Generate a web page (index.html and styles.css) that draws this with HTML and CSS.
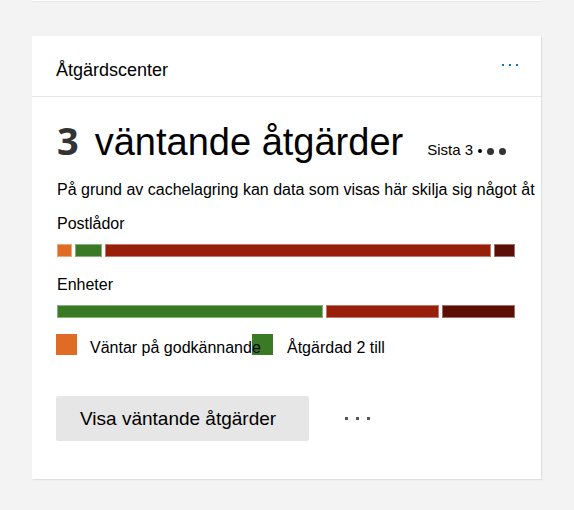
FILE: index.html
```html
<!DOCTYPE html>
<html lang="sv">
<head>
<meta charset="utf-8">
<link rel="stylesheet" href="styles.css">
</head>
<body>
<div class="prev-card"></div>
<section class="card">
  <header class="card-header">
    <h2 class="card-title">Åtgärdscenter</h2>
    <span class="dots blue"><i></i><i></i><i></i></span>
  </header>
  <div class="card-body">
    <div class="headline">
      <span class="count">3</span>
      <span class="headline-text">väntande åtgärder</span>
      <span class="recent">Sista 3<i class="pip small"></i><i class="pip big"></i><i class="pip big"></i></span>
    </div>
    <p class="note">På grund av cachelagring kan data som visas här skilja sig något åt</p>

    <div class="metric">
      <div class="metric-label">Postlådor</div>
      <div class="bar">
        <span class="seg orange" style="width: 15px"></span>
        <span class="seg green" style="width: 27px"></span>
        <span class="seg red" style="width: 386px"></span>
        <span class="seg dark" style="width: 21px"></span>
      </div>
    </div>

    <div class="metric">
      <div class="metric-label">Enheter</div>
      <div class="bar">
        <span class="seg green" style="width: 266px"></span>
        <span class="seg red" style="width: 113px"></span>
        <span class="seg dark" style="width: 73px"></span>
      </div>
    </div>

    <div class="legend">
      <span class="swatch orange"></span>
      <span class="legend-text first">Väntar på godkännande</span>
      <span class="swatch green"></span>
      <span class="legend-text second">Åtgärdad 2 till</span>
    </div>

    <div class="actions">
      <button class="btn">Visa väntande åtgärder</button>
      <span class="dots grey"><i></i><i></i><i></i></span>
    </div>
  </div>
</section>
</body>
</html>
```
FILE: styles.css
```css
html, body {
  margin: 0;
  padding: 0;
}
body {
  background: #f3f3f3;
  font-family: "Liberation Sans", Arial, sans-serif;
  color: #000;
  width: 574px;
  height: 510px;
  overflow: hidden;
}
.prev-card {
  margin-left: 32px;
  width: 509px;
  height: 1px;
  background: #fff;
  box-shadow: 0 1px 1px rgba(0,0,0,0.06);
}
.card {
  margin: 35px 0 0 32px;
  width: 509px;
  height: 443px;
  background: #fff;
  box-shadow: 1px 1px 1px rgba(0,0,0,0.08), 0 0 1px rgba(0,0,0,0.04);
  box-sizing: border-box;
}
.card-header {
  height: 60px;
  border-bottom: 1px solid #e6e6e6;
  display: flex;
  align-items: center;
  justify-content: space-between;
  padding: 0 23px 0 24px;
}
.card-title {
  margin: 8px 0 0;
  font-weight: normal;
  font-size: 18px;
}
.dots {
  display: flex;
}
.dots i {
  display: block;
}
.dots.blue {
  gap: 5px;
  margin-top: -2px;
}
.dots.blue i {
  width: 2px;
  height: 2px;
  background: #0078d4;
}
.dots.grey {
  gap: 8px;
  margin-left: 36px;
}
.dots.grey i {
  width: 3px;
  height: 3px;
  background: #555;
}
.card-body {
  padding: 21px 24px 0 25px;
}
.headline {
  display: flex;
  align-items: baseline;
  height: 44px;
}
.count {
  font-family: "Open Sans", "Liberation Sans", sans-serif;
  font-weight: 700;
  font-size: 38px;
  color: #333;
  line-height: 44px;
}
.headline-text {
  font-size: 38px;
  line-height: 44px;
  margin-left: 16px;
}
.recent {
  font-size: 15px;
  margin-left: 24px;
}
.pip {
  display: inline-block;
  vertical-align: middle;
  border-radius: 50%;
  background: #333;
}
.pip.small {
  width: 4px;
  height: 4px;
  margin-left: 5px;
  background: #000;
}
.pip.big {
  width: 7px;
  height: 7px;
  margin-left: 5px;
}
.note {
  margin: 19px 0 0;
  font-size: 16px;
  line-height: 18px;
  white-space: nowrap;
}
.metric {
  margin-top: 16px;
}
.metric + .metric {
  margin-top: 19px;
}
.metric-label {
  font-size: 16px;
  line-height: 18px;
}
.bar {
  display: flex;
  gap: 3px;
  height: 13px;
  margin-top: 11px;
}
.seg {
  display: block;
  flex: none;
  box-sizing: border-box;
  height: 13px;
  border: 1px solid rgba(255,255,255,0.4);
}
.orange { background: #e06b25; }
.green { background: #3b7a25; }
.red { background: #98200b; }
.dark { background: #5c0f05; }
.legend {
  display: flex;
  align-items: flex-start;
  margin-top: 16px;
  height: 21px;
}
.swatch {
  width: 21px;
  height: 21px;
  flex: none;
}
.legend .swatch.orange {
  margin-left: -1px;
}
.legend-text {
  font-size: 16px;
  line-height: 21px;
  padding-top: 3px;
  white-space: nowrap;
}
.legend-text.first {
  margin-left: 13px;
  width: 162px;
  flex: none;
  position: relative;
  z-index: 1;
}
.legend-text.second {
  margin-left: 14px;
}
.actions {
  display: flex;
  align-items: center;
  margin-top: 41px;
}
.btn {
  width: 253px;
  height: 45px;
  border: none;
  border-radius: 2px;
  background: #e6e6e6;
  font-family: "Liberation Sans", Arial, sans-serif;
  font-size: 19px;
  color: #000;
  padding: 0 0 0 24px;
  text-align: left;
  margin-left: -1px;
}
```
